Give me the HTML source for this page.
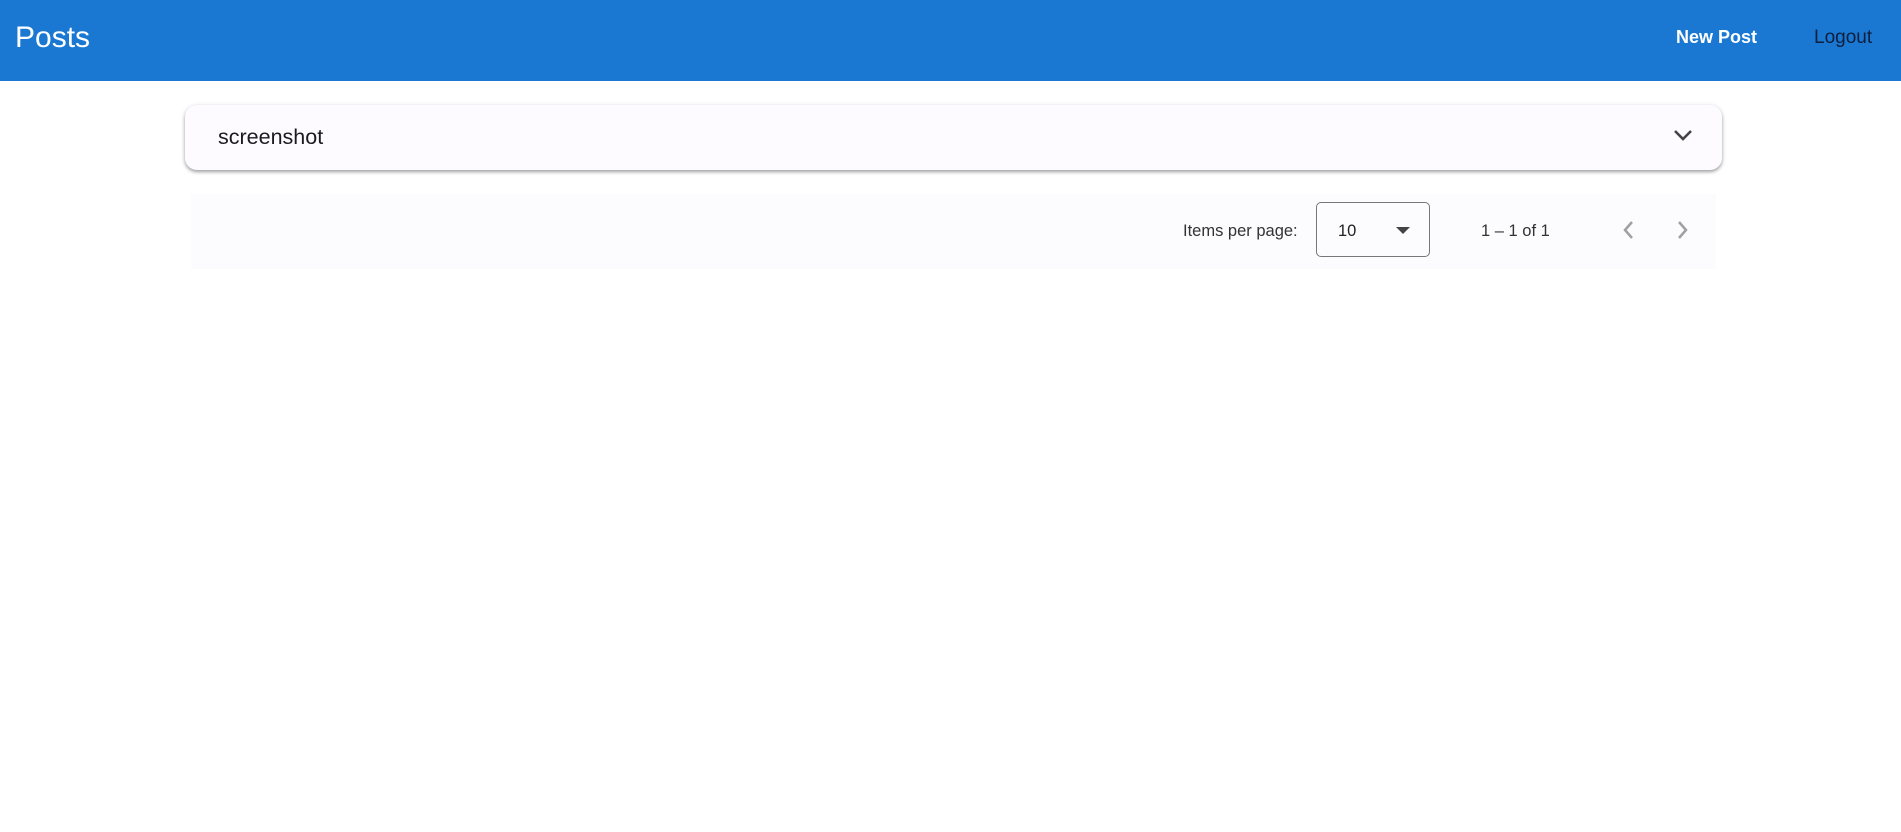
<!DOCTYPE html>
<html><head><meta charset="utf-8"><style>
html,body{margin:0;padding:0;background:#fff;width:1901px;height:832px;overflow:hidden;font-family:"Liberation Sans",sans-serif}
.hdr{position:absolute;left:0;top:0;width:1901px;height:81px;background:#1a78d2}
.t{position:absolute;white-space:nowrap}
.card{position:absolute;left:185px;top:105px;width:1537px;height:65px;background:#fdfbff;border-radius:12px;box-shadow:0 2px 3px rgba(0,0,0,.3),0 1px 6px rgba(0,0,0,.12)}
.pag{position:absolute;left:191px;top:194px;width:1525px;height:75px;background:#fcfbfe}
.sel{position:absolute;left:1316px;top:202px;width:114px;height:55px;border:1px solid #777;border-radius:5px;box-sizing:border-box}
</style></head><body>
<div class="hdr"></div>
<div class="t" style="left:15px;top:21px;font-size:30px;color:#fff">Posts</div>
<div class="t" style="left:1676px;top:27px;font-size:18px;font-weight:bold;color:#fff">New Post</div>
<div class="t" style="left:1814px;top:27px;font-size:19px;color:#0e1f3d">Logout</div>
<div class="card"></div>
<div class="t" style="left:218px;top:125px;font-size:21.5px;color:#1b1b1f">screenshot</div>
<svg class="t" style="left:1671px;top:126px" width="24" height="20" viewBox="0 0 24 20"><path d="M4 5l8 8 8-8" fill="none" stroke="#444" stroke-width="2.6"/></svg>
<div class="pag"></div>
<div class="t" style="left:1183px;top:222px;font-size:16.5px;color:#333">Items per page:</div>
<div class="sel"></div>
<div class="t" style="left:1338px;top:222px;font-size:16.5px;color:#222">10</div>
<svg class="t" style="left:1396px;top:225px" width="16" height="10"><path d="M0 2h14l-7 7z" fill="#444"/></svg>
<div class="t" style="left:1481px;top:222px;font-size:16.5px;color:#333">1 – 1 of 1</div>
<svg class="t" style="left:1618px;top:218px" width="20" height="24"><path d="M14 4l-7 8 7 8" fill="none" stroke="#a0a0a0" stroke-width="2.5"/></svg>
<svg class="t" style="left:1673px;top:218px" width="20" height="24"><path d="M6 4l7 8-7 8" fill="none" stroke="#a0a0a0" stroke-width="2.5"/></svg>
</body></html>
